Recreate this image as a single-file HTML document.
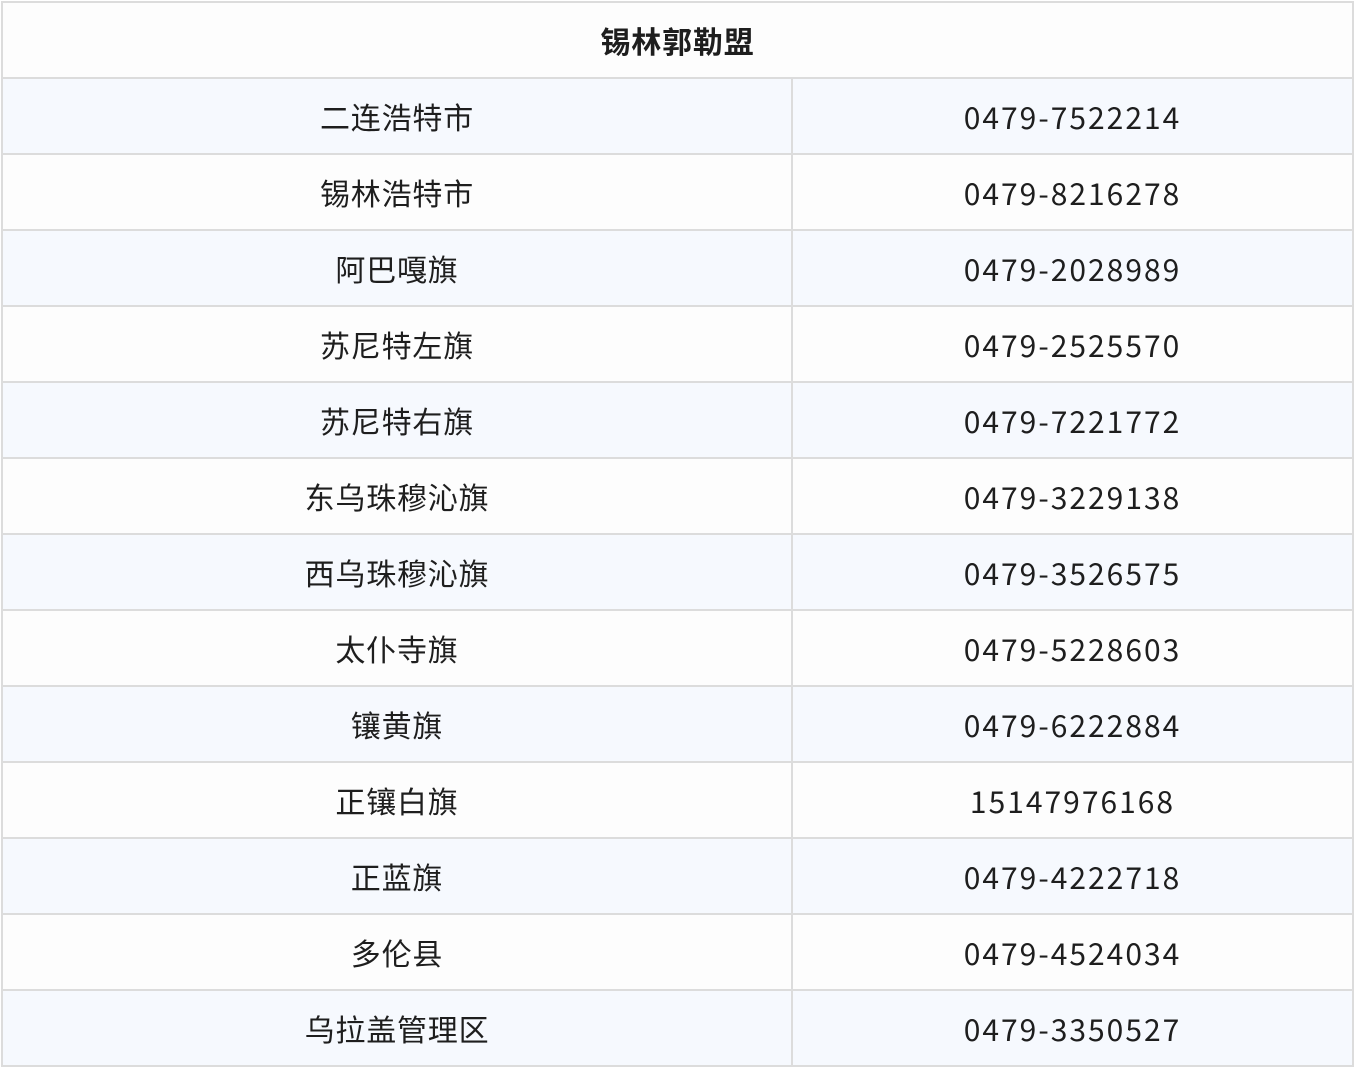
<!DOCTYPE html>
<html><head><meta charset="utf-8"><style>
html,body{margin:0;padding:0;background:#fff;width:1354px;height:1071px;overflow:hidden}
table{position:absolute;left:1px;top:1px;width:1353px;border-collapse:collapse;font-family:"Liberation Sans","Noto Sans CJK SC",sans-serif;color:#1e1e1e;font-size:30px;letter-spacing:0.8px}
td{border:2px solid #dcdcdc;height:74px;padding:0;text-align:center;vertical-align:middle;background:#fdfdfd}
tr:nth-child(even) td{background:#f6f9fe}
td.n{font-family:"Noto Sans CJK SC",sans-serif;letter-spacing:2px}
th{border:2px solid #dcdcdc;height:72px;font-weight:bold;background:#fdfdfd;font-family:"Noto Sans CJK SC",sans-serif}
</style></head><body>
<table>
<colgroup><col style="width:790px"><col></colgroup>
<tr><th colspan="2">锡林郭勒盟</th></tr>
<tr><td>二连浩特市</td><td class="n">0479-7522214</td></tr>
<tr><td>锡林浩特市</td><td class="n">0479-8216278</td></tr>
<tr><td>阿巴嘎旗</td><td class="n">0479-2028989</td></tr>
<tr><td>苏尼特左旗</td><td class="n">0479-2525570</td></tr>
<tr><td>苏尼特右旗</td><td class="n">0479-7221772</td></tr>
<tr><td>东乌珠穆沁旗</td><td class="n">0479-3229138</td></tr>
<tr><td>西乌珠穆沁旗</td><td class="n">0479-3526575</td></tr>
<tr><td>太仆寺旗</td><td class="n">0479-5228603</td></tr>
<tr><td>镶黄旗</td><td class="n">0479-6222884</td></tr>
<tr><td>正镶白旗</td><td class="n">15147976168</td></tr>
<tr><td>正蓝旗</td><td class="n">0479-4222718</td></tr>
<tr><td>多伦县</td><td class="n">0479-4524034</td></tr>
<tr><td>乌拉盖管理区</td><td class="n">0479-3350527</td></tr>
</table>
</body></html>
